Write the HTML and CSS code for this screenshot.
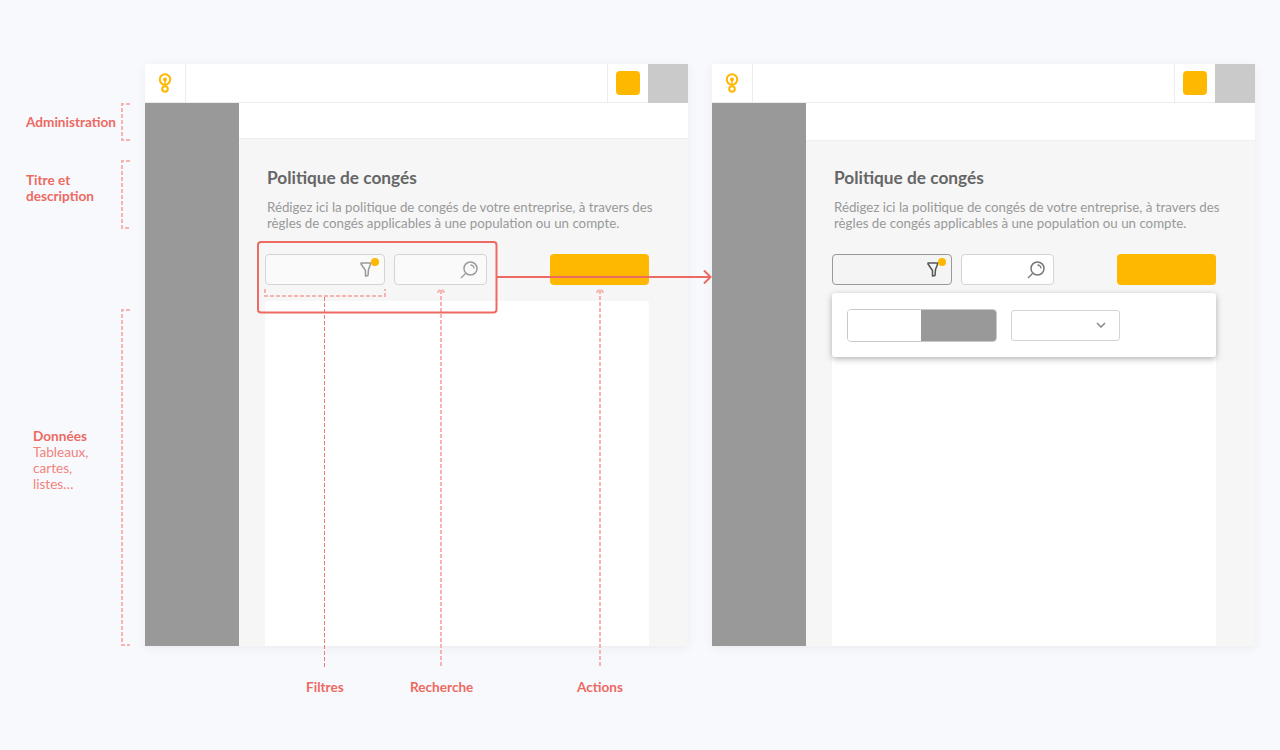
FILE: index.html
```html
<!DOCTYPE html>
<html lang="fr">
<head>
    <meta charset="UTF-8">
    <meta name="viewport" content="width=device-width, initial-scale=1.0">
    <title>Politique de congés</title>
    <link rel="stylesheet" href="styles.css">
</head>
<body>
    <div class="screens">
        <!-- etat initial -->
        <section class="frame">
            <header class="topbar">
                <div class="logo">
                    <svg width="14" height="20" viewBox="0 0 14 20"><circle cx="7" cy="6.5" r="5.2" fill="none" stroke="#ffb800" stroke-width="2"/><circle cx="7" cy="6.5" r="2" fill="#ffb800"/><path d="M7 7v5" stroke="#ffb800" stroke-width="1.5"/><circle cx="7" cy="16" r="2.8" fill="none" stroke="#ffb800" stroke-width="2"/></svg>
                </div>
                <div class="topbar-space"></div>
                <div class="topbar-action"><span class="square"></span></div>
                <div class="avatar"></div>
            </header>
            <div class="frame-body">
                <aside class="sidebar"></aside>
                <main class="main">
                    <div class="admin-bar"></div>
                    <div class="content">
                        <h1>Politique de congés</h1>
                        <p class="desc">Rédigez ici la politique de congés de votre entreprise, à travers des<br>règles de congés applicables à une population ou un compte.</p>
                        <div class="toolbar">
                            <div class="control filter">
                                <span class="icon-wrap">
                                    <svg width="14" height="18" viewBox="0 0 14 18"><path d="M1 2h10L8.500 8.500 8 14.500 5.500 15V9.500L1 3z" fill="none" stroke="#9b9b9b" stroke-width="1.500" stroke-linejoin="round"/></svg>
                                    <span class="dot"></span>
                                </span>
                            </div>
                            <div class="control search">
                                <svg width="18" height="18" viewBox="0 0 18 18"><circle cx="10.500" cy="7.500" r="6.500" fill="none" stroke="#9b9b9b" stroke-width="1.500"/><path d="M1 17l4.500-4.500M10.500 4a3.500 3.500 0 0 1 3.500 3.500" fill="none" stroke="#9b9b9b" stroke-width="1.300"/></svg>
                            </div>
                            <div class="cta"></div>
                        </div>
                        <div class="table-card"></div>
                    </div>
                </main>
            </div>
        </section>

        <!-- filtres ouverts -->
        <section class="frame">
            <header class="topbar">
                <div class="logo">
                    <svg width="14" height="20" viewBox="0 0 14 20"><circle cx="7" cy="6.5" r="5.2" fill="none" stroke="#ffb800" stroke-width="2"/><circle cx="7" cy="6.5" r="2" fill="#ffb800"/><path d="M7 7v5" stroke="#ffb800" stroke-width="1.5"/><circle cx="7" cy="16" r="2.8" fill="none" stroke="#ffb800" stroke-width="2"/></svg>
                </div>
                <div class="topbar-space"></div>
                <div class="topbar-action"><span class="square"></span></div>
                <div class="avatar"></div>
            </header>
            <div class="frame-body">
                <aside class="sidebar"></aside>
                <main class="main">
                    <div class="admin-bar tall"></div>
                    <div class="content after-tall">
                        <h1>Politique de congés</h1>
                        <p class="desc">Rédigez ici la politique de congés de votre entreprise, à travers des<br>règles de congés applicables à une population ou un compte.</p>
                        <div class="toolbar">
                            <div class="control filter active">
                                <span class="icon-wrap">
                                    <svg width="14" height="18" viewBox="0 0 14 18"><path d="M1 2h10L8.500 8.500 8 14.500 5.500 15V9.500L1 3z" fill="none" stroke="#555" stroke-width="1.500" stroke-linejoin="round"/></svg>
                                    <span class="dot"></span>
                                </span>
                            </div>
                            <div class="control search white">
                                <svg width="18" height="18" viewBox="0 0 18 18"><circle cx="10.500" cy="7.500" r="6.500" fill="none" stroke="#777" stroke-width="1.500"/><path d="M1 17l4.500-4.500M10.500 4a3.500 3.500 0 0 1 3.500 3.500" fill="none" stroke="#777" stroke-width="1.300"/></svg>
                            </div>
                            <div class="cta"></div>
                        </div>
                        <div class="table-card with-popover">
                            <div class="popover">
                                <div class="toggle"><span class="toggle-off"></span><span class="toggle-on"></span></div>
                                <div class="select">
                                    <svg width="10" height="6" viewBox="0 0 10 6"><path d="M1 1l4 4 4-4" fill="none" stroke="#888" stroke-width="1.500"/></svg>
                                </div>
                            </div>
                        </div>
                    </div>
                </main>
            </div>
        </section>
    </div>

    <!-- annotations par dessus les maquettes -->
    <svg class="marks" width="1280" height="750" viewBox="0 0 1280 750">
        <g class="dashed">
            <path d="M130 104h-8v36h8"/>
            <path d="M130 161h-8v67h8"/>
            <path d="M130 310h-8v335h8"/>
            <path d="M265 289v7h120v-7"/>
            <path d="M441 290v377M437.500 292.500l3.500-3.500 3.500 3.500"/>
            <path d="M600 290v377M596.500 292.500l3.500-3.500 3.500 3.500"/>
        </g>
        <path class="dashed-thin" d="M324.500 297v370"/>
        <rect class="solid" x="258" y="242" width="238.500" height="70.500" rx="3"/>
        <path class="solid" d="M497 277h213M704 270.500l6.500 6.500-6.500 6.500"/>
    </svg>

    <div class="note note-admin"><b>Administration</b></div>
    <div class="note note-titre"><b>Titre et<br>description</b></div>
    <div class="note note-data"><b>Données</b><br>Tableaux,<br>cartes,<br>listes…</div>
    <div class="note note-filtres"><b>Filtres</b></div>
    <div class="note note-recherche"><b>Recherche</b></div>
    <div class="note note-actions"><b>Actions</b></div>
</body>
</html>
```

FILE: styles.css
```css
* {
    box-sizing: border-box;
}
body {
    margin: 0;
    height: 750px;
    overflow: hidden;
    position: relative;
    background-color: #f8f9fd;
    font-family: Lato, "Noto Sans", sans-serif;
}
.screens {
    display: flex;
    gap: 24px;
    padding: 64px 0 0 145px;
}
.frame {
    width: 543px;
    height: 582px;
    display: flex;
    flex-direction: column;
    background: #fff;
    box-shadow: 0 2px 10px rgba(0, 0, 0, 0.06);
}
.topbar {
    height: 39px;
    display: flex;
    border-bottom: 1px solid #ececec;
}
.logo {
    width: 41px;
    display: flex;
    align-items: center;
    justify-content: center;
    border-right: 1px solid #ececec;
}
.topbar-space {
    flex: 1;
}
.topbar-action {
    width: 41px;
    display: flex;
    align-items: center;
    justify-content: center;
    border-left: 1px solid #ececec;
}
.square {
    width: 24px;
    height: 24px;
    border-radius: 4px;
    background: #ffb800;
}
.avatar {
    width: 40px;
    height: 39px;
    background: #cacaca;
}
.frame-body {
    flex: 1;
    display: flex;
    min-height: 0;
}
.sidebar {
    width: 94px;
    background: #999;
}
.main {
    flex: 1;
    display: flex;
    flex-direction: column;
    min-width: 0;
}
.admin-bar {
    height: 36px;
    background: #fff;
    border-bottom: 1px solid #eee;
}
.admin-bar.tall {
    height: 38px;
}
.content {
    flex: 1;
    display: flex;
    flex-direction: column;
    padding: 27px 39px 0 26px;
    background: #f6f6f6;
    min-height: 0;
}
.content.after-tall {
    padding-top: 25px;
}
h1 {
    margin: 0 0 0 2px;
    font-size: 17.3px;
    line-height: 24px;
    font-weight: 700;
    color: #666;
}
.desc {
    margin: 9px -20px 0 2px;
    font-size: 13.3px;
    line-height: 16px;
    color: #999;
}
.toolbar {
    display: flex;
    margin-top: 23px;
    height: 31px;
}
.control {
    height: 31px;
    display: flex;
    align-items: center;
    justify-content: flex-end;
    border: 1px solid #d4d4d4;
    border-radius: 4px;
    background: #fafafa;
}
.filter {
    width: 120px;
    padding-right: 10px;
}
.filter.active {
    border-color: #999;
    background: #f4f4f4;
}
.search {
    width: 93px;
    margin-left: 9px;
    padding-right: 8px;
}
.search.white {
    background: #fff;
}
.icon-wrap {
    position: relative;
    display: flex;
}
.dot {
    position: absolute;
    top: -3px;
    right: -5px;
    width: 8px;
    height: 8px;
    border-radius: 50%;
    background: #ffb800;
}
.cta {
    width: 99px;
    margin-left: auto;
    border-radius: 4px;
    background: #ffb800;
}
.table-card {
    flex: 1;
    margin-top: 16px;
    background: #fff;
    border-radius: 3px 3px 0 0;
}
.table-card.with-popover {
    margin-top: 8px;
}
.popover {
    height: 64px;
    display: flex;
    align-items: center;
    gap: 14px;
    padding-left: 15px;
    background: #fff;
    border-radius: 3px;
    box-shadow: 0 2px 6px rgba(0, 0, 0, 0.3);
}
.toggle {
    width: 150px;
    height: 33px;
    display: flex;
    border: 1px solid #c8c8c8;
    border-radius: 4px;
    overflow: hidden;
}
.toggle-off {
    width: 73px;
    background: #fff;
}
.toggle-on {
    flex: 1;
    background: #999;
}
.select {
    width: 109px;
    height: 31px;
    display: flex;
    align-items: center;
    justify-content: flex-end;
    padding-right: 13px;
    border: 1px solid #d4d4d4;
    border-radius: 3px;
}
.marks {
    position: absolute;
    top: 0;
    left: 0;
}
.dashed {
    fill: none;
    stroke: #f6b3af;
    stroke-width: 2;
    stroke-dasharray: 4 2;
}
.dashed-thin {
    fill: none;
    stroke: #ef7d76;
    stroke-width: 1;
    stroke-dasharray: 4 2;
}
.solid {
    fill: none;
    stroke: #ec6a62;
    stroke-width: 2;
}
.note {
    position: absolute;
    font-size: 13.6px;
    line-height: 16px;
    color: #f2837c;
    white-space: nowrap;
}
.note b {
    font-weight: 700;
    color: #ec6a62;
}
.note-admin { left: 26px; top: 114px; }
.note-titre { left: 26px; top: 172px; }
.note-data { left: 33px; top: 428px; }
.note-filtres { left: 306px; top: 679px; }
.note-recherche { left: 410px; top: 679px; }
.note-actions { left: 577px; top: 679px; }
```
